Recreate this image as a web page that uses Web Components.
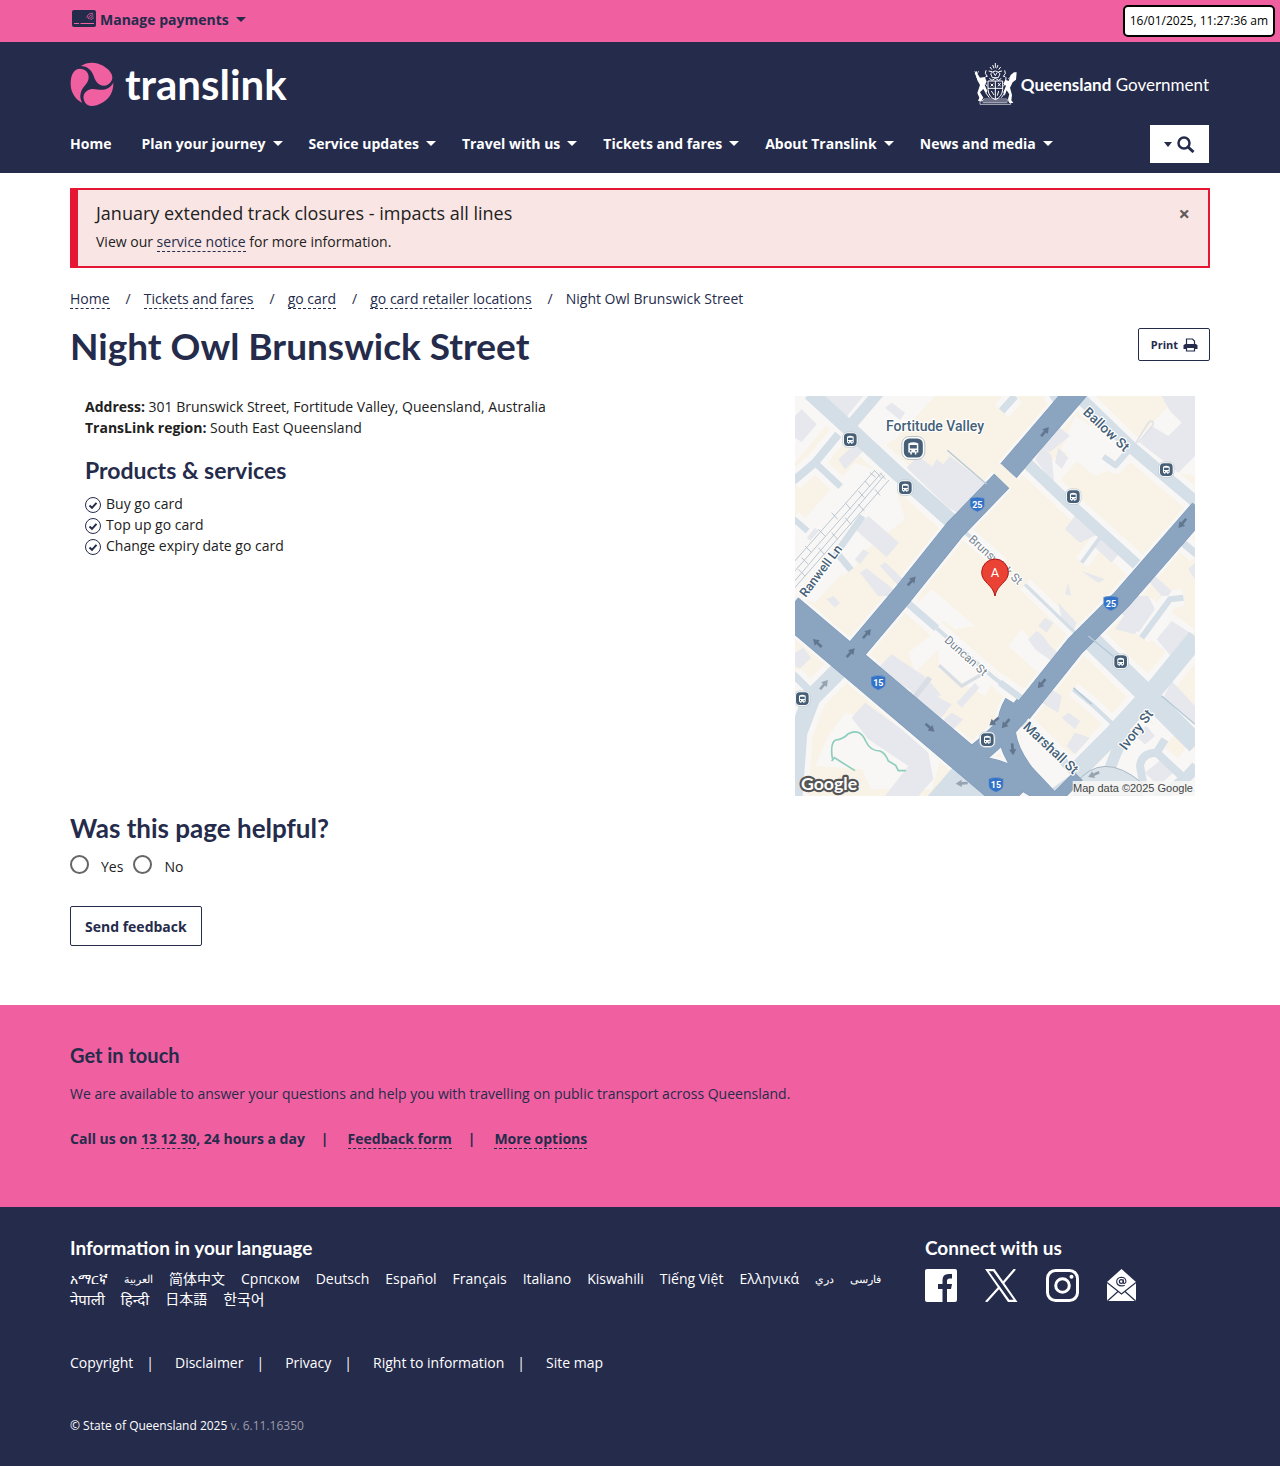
<!DOCTYPE html>
<html lang="en">
<head>
<meta charset="utf-8">
<meta name="viewport" content="width=device-width, initial-scale=1">
<title>Night Owl Brunswick Street | Translink</title>
<style>
  :root {
    --navy: #252b4b;
    --pink: #f060a1;
    --ink: #212121;
    --red: #e61735;
    --display: Lato, "Open Sans", sans-serif;
  }
  body {
    margin: 0;
    background: #fff;
    color: var(--ink);
    font: 14px/21px "Open Sans", "Noto Sans", "Noto Sans CJK SC", sans-serif;
  }
</style>
</head>
<body>
<tl-page>
  <tl-topbar slot="top" stamp="16/01/2025, 11:27:36 am">Manage payments</tl-topbar>
  <tl-header slot="top"></tl-header>
  <tl-alert heading="January extended track closures - impacts all lines">View our <a href="#notice">service notice</a> for more information.</tl-alert>
  <tl-breadcrumbs></tl-breadcrumbs>
  <tl-title>Night Owl Brunswick Street</tl-title>
  <tl-retailer><tl-map slot="map"></tl-map></tl-retailer>
  <tl-helpful></tl-helpful>
  <tl-touch slot="bottom"></tl-touch>
  <tl-footer slot="bottom"></tl-footer>
</tl-page>

<script>
const base = `
  *, *::before, *::after { box-sizing: border-box; }
  :host { display: block; }
  h1, h2, h3, p, ul, ol { margin: 0; padding: 0; }
  ul, ol { list-style: none; }
  svg { display: block; flex: none; }
  a { color: inherit; text-decoration: none; }
  button { font: inherit; color: inherit; cursor: pointer; margin: 0; }
  .wrap { max-width: 1140px; margin: 0 auto; }
  .caret { width: 0; height: 0; border: 5px solid transparent; border-top-color: currentColor; border-bottom: 0; flex: none; }
  .dash { border-bottom: 1px dashed currentColor; }
`;

function define(name, css, html) {
  customElements.define(name, class extends HTMLElement {
    constructor() {
      super();
      const t = document.createElement('template');
      const body = typeof html === 'function' ? html(this) : html;
      t.innerHTML = `<style>${base}${css}</style>${body}`;
      this.attachShadow({ mode: 'open' }).append(t.content.cloneNode(true));
    }
  });
}

define('tl-page', `
  main { max-width: 1140px; margin: 0 auto; padding: 15px 0 59px; }
`, `<slot name="top"></slot><main><slot></slot></main><slot name="bottom"></slot>`);

define('tl-topbar', `
  :host { background: var(--pink); color: var(--navy); position: relative; }
  .wrap { display: flex; align-items: center; height: 42px; }
  button { display: flex; align-items: center; border: 0; background: none; padding: 0 0 4px 1px; font-weight: 700; }
  svg { margin-right: 3px; }
  .caret { margin-left: 7px; }
  time { position: absolute; right: 5px; top: 5px; border: 2px solid #000; border-radius: 5px; background: #fff; color: #000;
    font-size: 12px; line-height: 18px; padding: 5px; }
`, el => `
  <div class="wrap"><button type="button">
    <svg width="26" height="20" viewBox="0 0 26 20"><rect x="1" y="1" width="24" height="17" rx="2" fill="#252b4b"/>
      <path d="M3 14.500h5M9.500 14.500H23" stroke="#f060a1" stroke-width="1"/>
      <g fill="none" stroke="#f060a1" stroke-width=".8"><path d="M16 9a4.500 4.500 0 0 1 6-4.500M17.500 10a4 4 0 0 1 5-4M19 10.500a2.500 2.500 0 0 1 3.500-2.500M20.500 11a1.500 1.500 0 0 1 2-1.500"/></g></svg>
    <slot></slot><span class="caret"></span></button></div>
  <time>${el.getAttribute('stamp')}</time>`);

const navItems = ['Home', 'Plan your journey', 'Service updates', 'Travel with us', 'Tickets and fares', 'About Translink', 'News and media'];
const petal = 'M-29 57C-52 45-64 23-64 0C-64-30-53-46-36-46C-20-45-10-36-10-20C-10 0-30 8-34 28C-37 40-34 49-29 57Z';

define('tl-header', `
  :host { background: var(--navy); color: #fff; }
  .wrap { padding: 20px 0 10px; }
  .brand, .bar, .logo, .gov { display: flex; align-items: center; }
  .brand, .bar { justify-content: space-between; }
  .logo { gap: 11px; font: 700 42px/44px var(--display); }
  .gov { gap: 3px; font: 17px/24px var(--display); padding-right: 1px; }
  .gov span { padding-top: 2px; }
  .gov b { font-weight: 700; }
  .bar { margin-top: 19px; }
  nav { padding-bottom: 2px; }
  ul { display: flex; gap: 26px; font-weight: 700; }
  li:first-child { margin-right: 4px; }
  li a { display: flex; align-items: center; gap: 7px; }
  .search { display: flex; align-items: center; gap: 5px; border: 0; background: #fff; color: var(--navy);
    padding: 10px 14px; height: 38px; margin-right: 1px; }
  .search .caret { border-width: 5px 4px 0; }
`, `
  <div class="wrap">
    <div class="brand">
      <a class="logo" href="#home">
        <svg width="44" height="44" viewBox="-66 -66 132 132" fill="#f060a1"><path d="${petal}"/><path d="${petal}" transform="rotate(120)"/><path d="${petal}" transform="rotate(240)"/></svg>
        <span>translink</span></a>
      <a class="gov" href="#government">
        <svg width="44" height="42" viewBox="0 0 132 126" fill="none" stroke="#fff" stroke-width="3">
          <path d="M56 6l4 10M64 0v14M72 6l-4 10M48 12l6 8M80 12l-6 8M44 24l10 2M84 24l-10 2M50 32q14-16 28 0l-5 12H55zM36 22q-6 10 4 18q-12 0-6 14M92 22q6 10-4 18q12 0 6 14M58 28l6 10 6-10" />
          <path d="M42 54h44v26q-2 22-22 30q-20-8-22-30zM64 54v54M42 76h44M50 62l8 8M58 62l-8 8M72 60l8 10M80 60l-8 10M52 84l8 12M74 84l-4 14"/>
          <path d="M46 46l8 6 10-6 10 6 8-6M34 62l6 8M94 62l-6 8M36 90l10 14M92 90l-10 14"/>
          <path fill="#fff" stroke="none" d="M2 30l6-6 4 12 6 8 14-2 6 14-6 10 8 18-4 8-8-14-10 10 10 16-6 10h-10l4-10-6-14 8-24-8-14-2-8zM128 28l-8 0-10 8-6 18-10-4-6 12 8 6-8 20 4 10 6-16 8 12-4 14 4 12h12l-6-8 2-16-6-22 8-16 10-8z"/>
          <path d="M8 34L2 24M14 24l-4 8M6 44l8-6M102 48l18-16M106 54l18-14M18 114h92v10H18zM24 114l6-6h68l6 6M26 119h74" stroke-width="2"/>
        </svg>
        <span><b>Queensland</b> Government</span></a>
    </div>
    <div class="bar">
      <nav aria-label="Main"><ul>${navItems.map((t, i) => `<li><a href="#nav${i}">${t}${i ? '<span class="caret"></span>' : ''}</a></li>`).join('')}</ul></nav>
      <button class="search" type="button" aria-label="Search"><span class="caret"></span>
        <svg width="18" height="18" viewBox="0 0 18 18" fill="none" stroke="#252b4b"><circle cx="7" cy="8" r="5.500" stroke-width="2.500"/><path d="M11 12l5.500 5" stroke-width="3"/></svg></button>
    </div>
  </div>`);

define('tl-alert', `
  :host { display: flex; justify-content: space-between; align-items: flex-start; border: 2px solid var(--red); border-left-width: 8px;
    background: #f9e5e3; padding: 11px 18px 13px; }
  h2 { font-size: 18px; line-height: 24px; font-weight: 400; margin-bottom: 6px; }
  p { line-height: 22px; }
  ::slotted(a) { color: var(--navy); text-decoration: none; border-bottom: 1px dashed var(--navy); }
  button { border: 0; background: none; padding: 0; color: #5f5b5b; font-size: 20px; line-height: 26px; font-weight: 700; }
`, el => `<div><h2>${el.getAttribute('heading')}</h2><p><slot></slot></p></div><button type="button" aria-label="Close">×</button>`);

define('tl-breadcrumbs', `
  :host { margin-top: 21px; }
  ol { display: flex; flex-wrap: wrap; color: var(--navy); line-height: 20px; }
  li + li::before { content: "/"; padding: 0 13px 0 16px; }
  a { display: inline-block; line-height: 19px; }
`, `<nav aria-label="Breadcrumb"><ol>
  <li><a class="dash" href="#a">Home</a></li><li><a class="dash" href="#b">Tickets and fares</a></li><li><a class="dash" href="#c">go card</a></li><li><a class="dash" href="#d">go card retailer locations</a></li><li aria-current="page">Night Owl Brunswick Street</li></ol></nav>`);

define('tl-title', `
  :host { display: flex; justify-content: space-between; align-items: flex-start; color: var(--navy); margin-top: 19px; }
  h1 { font: 700 37px/36px var(--display); }
  button { display: flex; align-items: center; gap: 5px; height: 33px; padding: 0 11px 0 12px; background: #fff;
    border: 1px solid var(--navy); border-radius: 2px; font-size: 11px; font-weight: 700; }
`, `<h1><slot></slot></h1>
  <button type="button">Print
    <svg width="15" height="14" viewBox="0 0 15 14"><path d="M3.500 6.500V1h6L11.500 3v3.500" fill="#fff" stroke="#252b4b" stroke-width="1.200"/><path d="M2 6h11l1.500 1.500V11H.5V7.500z" fill="#252b4b"/><path d="M3.500 9.500h8v3.500h-8z" fill="#fff" stroke="#252b4b" stroke-width="1.200"/></svg></button>`);

define('tl-retailer', `
  :host { display: flex; justify-content: space-between; margin: 32px 15px 0; }
  b { font-weight: 700; }
  h2 { font: 700 23px/28px var(--display); color: var(--navy); margin: 18px 0 9px; }
  li { display: flex; align-items: center; gap: 5px; }
  svg { margin-top: 2px; }
`, `<section>
    <p><b>Address:</b> 301 Brunswick Street, Fortitude Valley, Queensland, Australia</p>
    <p><b>TransLink region:</b> South East Queensland</p>
    <h2>Products &amp; services</h2>
    <ul>${['Buy go card', 'Top up go card', 'Change expiry date go card'].map(t => `<li><svg width="16" height="16" viewBox="0 0 16 16" fill="none" stroke="#252b4b"><circle cx="8" cy="8" r="7.500"/><path d="M4.500 8.500l2.500 2.300 4.500-5" stroke-width="2"/></svg>${t}</li>`).join('')}</ul>
  </section><slot name="map"></slot>`);

const stop = (x, y, s = 1) => `<g transform="translate(${x} ${y}) scale(${s})"><rect x="-23" y="-23" width="46" height="46" rx="15" fill="#fff" stroke="#b8c2cc" stroke-width="2"/><rect x="-19" y="-19" width="38" height="38" rx="11" fill="#465f77"/><path d="M-10-9q10-5 20 0V9H6v4H3V9H-3v4H-6V9H-10z" fill="#fff"/><path d="M-7-6H7V1H-7zM-7 4h3v3h-3zM4 4h3v3H4z" fill="#465f77"/></g>`;
const shield = (x, y, n) => `<g transform="translate(${x} ${y})"><path d="M-22-18Q0-26 22-18V4Q20 16 0 23Q-20 16-22 4Z" fill="#3272c8" stroke="#8ba5c1" stroke-width="2"/><text y="10" font-size="27" font-weight="700" fill="#fff" text-anchor="middle">${n}</text></g>`;
const arrow = (x, y, r, c = '#62778f') => `<path transform="translate(${x} ${y}) rotate(${r})" d="M-18-4H0V-11L18 0L0 11V4H-18Z" fill="${c}"/>`;
const streets = [
  ['M45-10L160 95L300 225L480 385', 46], ['M255-15L165 90', 34], ['M130 115L60 200L-5 255', 24], ['M60 200L137 272', 20],
  ['M-5 368L38 405', 18], ['M203 360L125 470L168 522', 20], ['M850 0L1010 155L1205 320', 36], ['M700 205L820 320L1025 505', 34],
  ['M925 182L962 208L1008 155', 18], ['M500 400L620 505', 12], ['M690 565L840 710', 10], ['M325 610L425 697', 22], ['M425 697L600 848L680 908', 12],
  ['M615 860L680 908', 20], ['M880 725L1060 900L1205 1045', 60], ['M1205 725L1070 890L950 1020L835 1135', 56], ['M670 965L850 1140', 26],
  ['M130 825L50 905L10 1010L-5 1210', 54], ['M-5 835L40 880', 22], ['M1145 425L1205 475', 22], ['M1165 605L1125 610L1040 725', 18],
  ['M620 45L660 0', 22], ['M770-10L790 20', 24], ['M925 1180Q960 1060 1000 1000', 34], ['M1050 1190L1035 1110Q1040 1070 1085 1070L1110 1030M1085 1070L1160 1140', 24],
  ['M1075 1200Q1140 1190 1205 1110', 34], ['M835 880L890 925L960 990', 12], ['M860 500L915 425', 12], ['M770 1190L840 1140', 20]
];
const majors = [['M850-20L640 225', 62], ['M620 255L480 400L320 600L160 790', 60], ['M-20 640L600 1165L650 1220', 90],
  ['M1215 340L980 610L840 750L680 950', 58], ['M690 930Q560 1080 500 1100', 62], ['M655 920Q600 1010 690 1130L770 1215', 52],
  ['M560 1110Q660 1130 740 1190', 56], ['M850 1140L780 1210', 34]];
const draw = (list, extra, color) => list.map(([d, w]) => `<path d="${d}" stroke-width="${w + extra}" stroke="${color}"/>`).join('');

define('tl-map', `
  :host { width: 400px; height: 400px; flex: none; }
  svg { width: 100%; height: 100%; font-family: Roboto, sans-serif; }
`, `<svg viewBox="0 0 1200 1200" role="img" aria-label="Map of Night Owl Brunswick Street">
  <rect width="1200" height="1200" fill="#f8f3e6"/>
  <g fill="#f8f7f5">
    <path d="M0 0H45L110 70L0 200zM185 75L260 0H420L300 130L250 160zM0 400L180 200L290 240L330 370L190 480L60 620L0 600z"/>
    <path d="M840 60L1000 160L1130 20H1200V240L1000 200L900 240L800 160zM740 220L800 170L850 190L780 270zM830 330L1050 480L1020 560L850 400z"/>
    <path d="M430 700L600 850L570 900L430 820zM340 770L430 700L430 760L360 830zM150 950L330 990L440 1080L410 1180H230L200 1120L60 1110L100 1020z"/>
    <path d="M670 970L850 1130L760 1190L690 1100zM950 620L1060 600L1200 700L1140 790L1030 700zM1000 940L1200 1060V1200H850L920 1100z"/>
    <path d="M410 580L540 690L480 700L370 620zM640 750L680 700L760 790L730 830z"/>
  </g>
  <g fill="none" stroke-linejoin="round">${draw(streets, 34, '#f8f7f5')}${draw(majors, 20, '#f8f7f5')}</g>
  <g fill="#e7e8ed">
    <path d="M20 40L65 85L20 138L0 125V60zM85 0H205L155 62zM270 35L290 20L330 50L315 72zM185 140L205 165L150 220L130 190z"/>
    <path d="M335 215L370 180L412 212L425 190L445 205L465 180L572 265L490 352L460 335z"/>
    <path d="M180 400L220 360L312 440L275 483zM180 490L205 460L222 470L195 503zM195 530L215 517L320 600H250zM255 510L270 498L330 555L315 575z"/>
    <path d="M35 425L60 395L72 405L45 435z"/>
    <path d="M740 150L785 88L825 120L765 168zM720 190L745 150L770 180L778 265zM780 200L790 155L820 185L800 218zM1100 0H1200V180L1150 230L1035 140L1070 90L1120 120L1160 80L1125 45z"/>
    <path d="M810 400L840 360L910 415L855 440zM895 450L910 425L970 475L950 500zM810 595L820 560L828 600zM860 525L930 550L910 560L880 540z"/>
    <path d="M255 810L290 775L395 845L440 900L360 890L330 895L350 885L275 840zM360 900L405 885L440 910L470 925L440 965L395 960zM430 985L470 950L505 970L470 1005zM485 920L540 860L553 875L500 935z"/>
    <path d="M170 965L210 920L320 1000L400 1070L415 1150L370 1200H270L340 1110L220 1030zM0 770L25 755L48 785L15 818L0 810z"/>
    <path d="M700 730L725 705L745 720L765 750L795 775L770 795L720 760zM730 690L750 665L775 680L755 710z"/>
    <path d="M740 920L770 880L800 900L790 950zM800 965L820 950L855 975L840 1000zM840 1010L885 1025L840 1075L815 1050zM790 620L845 680L835 710L800 670zM960 700L1000 640L1040 680L1020 715z"/>
    <path d="M970 640L1010 600H1060L1080 640L1030 710zM1085 730L1130 675L1200 720L1140 795zM1105 905L1130 855L1200 930V985zM1010 1010L1055 990L1080 1020L1050 1045z"/>
    <path d="M1060 555L1080 540L1130 585L1120 600H1100zM1180 520L1200 500V550zM1050 1130L1100 1090L1135 1130L1090 1170zM95 610L115 600L135 620L120 635z"/>
  </g>
  <path fill="#f8f3e6" d="M1110 1055L1150 1000L1190 1030L1150 1085zM880 300L910 255L955 290L920 335z"/>
  <g fill="none" stroke="#bac7d2" stroke-width="3"><path d="M-5 500L240 222M-5 530L260 230M-5 560L268 238M-5 580L282 252"/>
    <path d="M225 230L242 244M240 225L258 245M255 230L272 250M110 350L128 370M150 320L168 340M190 285L208 305M70 400L90 420M30 450L50 470M20 485L40 505M150 365L168 385M190 325L208 345M110 410L128 430M70 455L88 475M210 255L225 272M240 280L255 298M10 520L30 540"/></g>
  <g fill="none" stroke-linejoin="round">
    ${draw(streets.slice(0, 6), 0, '#d3dee6')}${draw(streets.slice(6), 0, '#d5dfe7')}
    <path d="M432 808L500 870L560 835" stroke="#d9dee5" stroke-width="10"/>
    <path d="M350 915L405 845" stroke="#d9dee5" stroke-width="16"/>
    <path d="M1020 145L1060 80Q1075 68 1075 85L1030 140" stroke="#dcdfe4" stroke-width="4"/>
  </g>
  <path d="M475 1112L660 1210H390z" fill="#d5dfe7"/>
  <path d="M840 1165Q920 1060 1040 1160V1200H840z" fill="#d9e2e8" stroke="#a9b8c4" stroke-width="3"/>
  <g fill="none" stroke-linejoin="round">${draw(majors, 3, '#7896b8')}${draw(majors, 0, '#8ba5c1')}</g>
  <path d="M610 211L661 259" stroke="#f8f3e6" stroke-width="22"/>
  <path d="M1115 1175Q1145 1165 1200 1185" stroke="#86cbb8" fill="none" stroke-width="4"/>
  <path d="M457 163L575 265M880 720L960 785M835 875L890 925M1100 900L1200 985" stroke="#b4c8d9" stroke-width="4"/>
  <path d="M110 1095L118 1085L180 1124M112 1087Q105 1040 122 1032Q145 1030 160 1013Q195 995 212 1035Q225 1065 255 1065Q270 1070 280 1095L302 1108L310 1124H333" fill="none" stroke="#8dcdbd" stroke-width="5"/>
  ${arrow(350, 555, -48)}${arrow(750, 107, -50)}${arrow(1162, 382, 130)}${arrow(67, 741, -137)}${arrow(216, 713, -48)}${arrow(167, 770, -48)}${arrow(87, 866, -50, '#96a3b0')}${arrow(405, 995, 42)}${arrow(597, 977, 140)}${arrow(740, 863, 130)}${arrow(632, 983, 130)}${arrow(653, 1060, 85)}${arrow(500, 1162, 177, '#96a3b0')}${arrow(896, 1136, 157, '#96a3b0')}
  <g fill="#465f77" stroke="#fff" stroke-width="7" paint-order="stroke" stroke-linejoin="round" font-weight="500" font-size="41">
    <text x="273" y="105" font-size="42">Fortitude Valley</text>
    <text transform="translate(862 52) rotate(43)">Ballow St</text>
    <text transform="translate(32 606) rotate(-53)" font-size="38">Ranwell Ln</text>
    <text transform="translate(682 995) rotate(43)">Marshall St</text>
    <text transform="translate(993 1065) rotate(-53)">Ivory St</text>
    <g fill="#76838f" font-weight="400" font-size="35"><text transform="translate(519 433) rotate(42)">Brunswick St</text><text transform="translate(446 735) rotate(42)">Duncan St</text></g>
  </g>
  ${shield(547, 325, 25)}${shield(948, 622, 25)}${shield(250, 860, 15)}${shield(603, 1166, 15)}
  ${stop(166, 131)}${stop(331, 275)}${stop(355, 156, 1.5)}${stop(835, 302)}${stop(1114, 221)}${stop(22, 908)}${stop(577, 1031)}${stop(977, 797)}
  <path d="M600 600C594 565 560 560 560 529A40 40 0 0 1 640 529C640 560 606 565 600 600Z" fill="#ea4335" stroke="#b31412" stroke-width="3"/>
  <text x="600" y="542" font-size="39" fill="#fff" text-anchor="middle">A</text>
  <text x="18" y="1182" font-family="Lato" font-size="53" font-weight="700" fill="#fff" stroke="#555" stroke-width="13" paint-order="stroke" stroke-linejoin="round">Google</text>
  <rect x="833" y="1155" width="367" height="45" fill="#f7f7f5" fill-opacity=".85"/>
  <text x="1194" y="1187" font-family="Liberation Sans" font-size="33" fill="#444" text-anchor="end">Map data ©2025 Google</text>
</svg>`);

define('tl-helpful', `
  :host { color: var(--navy); margin-top: 16px; }
  h2 { font: 700 26px/32px var(--display); }
  fieldset { border: 0; margin: 0; padding: 0; min-width: 0; }
  .opts { display: flex; gap: 10px; margin-top: 9px; }
  label { display: flex; gap: 12px; color: var(--ink); padding-top: 2px; line-height: 24px; }
  input { appearance: none; width: 19px; height: 19px; margin: 0; border: 2px solid #666; border-radius: 50%; background: #fff; }
  input:checked { background: var(--navy); box-shadow: inset 0 0 0 3px #fff; }
  button { margin-top: 27px; height: 40px; padding: 0 14px; border: 1px solid var(--navy); border-radius: 2px; background: #fff; font-weight: 700; }
`, `<form><fieldset aria-labelledby="q"><h2 id="q">Was this page helpful?</h2>
  <div class="opts"><label for="yes"><input type="radio" id="yes" name="helpful">Yes</label><label for="no"><input type="radio" id="no" name="helpful">No</label></div></fieldset>
  <button type="button">Send feedback</button></form>`);

define('tl-touch', `
  :host { background: var(--pink); color: var(--navy); padding: 36px 0 58px; }
  h2 { font: 700 20px/28px var(--display); margin-bottom: 14px; }
  ul { display: flex; margin-top: 24px; font-weight: 700; }
  li + li::before { content: "|"; padding: 0 19px 0 16px; }
  a { display: inline-block; line-height: 19px; }
`, `<div class="wrap"><h2>Get in touch</h2>
  <p>We are available to answer your questions and help you with travelling on public transport across Queensland.</p>
  <ul><li>Call us on <a class="dash" href="tel:131230">13 12 30</a>, 24 hours a day</li><li><a class="dash" href="#feedback">Feedback form</a></li><li><a class="dash" href="#more">More options</a></li></ul></div>`);

const langs = [['am', 'አማርኛ'], ['ar', 'العربية'], ['zh', '简体中文'], ['sr', 'Српском'], ['de', 'Deutsch'], ['es', 'Español'], ['fr', 'Français'], ['it', 'Italiano'], ['sw', 'Kiswahili'], ['vi', 'Tiếng Việt'], ['el', 'Ελληνικά'], ['prs', 'دري'], ['fa', 'فارسی'], ['ne', 'नेपाली'], ['hi', 'हिन्दी'], ['ja', '日本語'], ['ko', '한국어']];

define('tl-footer', `
  :host { background: var(--navy); color: #fff; padding: 28px 0 31px; }
  .cols { display: grid; grid-template-columns: 3fr 1fr; }
  .cols > :first-child { padding-right: 30px; }
  h2 { font: 700 19px/26px var(--display); }
  .langs { display: flex; flex-wrap: wrap; column-gap: 16px; margin-top: 8px; }
  .langs li { height: 20px; line-height: 20px; white-space: nowrap; }
  :lang(ar), :lang(prs), :lang(fa) { font-size: 11px; }
  :lang(ne), :lang(hi), :lang(ko) { font-size: 15px; }
  .social { display: flex; gap: 28px; margin-top: 8px; }
  .links { display: flex; margin-top: 43px; }
  .links li + li::before { content: "|"; padding: 0 21px 0 13px; }
  p { margin-top: 42px; font-size: 12px; }
  p span { color: #9b9da9; }
`, `<div class="wrap"><div class="cols">
  <section><h2>Information in your language</h2><ul class="langs">${langs.map(([c, t]) => `<li lang="${c}"><a href="#${c}">${t}</a></li>`).join('')}</ul></section>
  <section><h2>Connect with us</h2><ul class="social">
    <li><a href="#fb" aria-label="Facebook"><svg width="32" height="33" viewBox="0 0 32 33"><rect width="32" height="33" rx="2" fill="#fff"/><path d="M17.500 33V20H13v-5h4.500v-4q0-6 6-6H27v4.500h-2.500q-2.500 0-2.500 2.500v3h5l-1 5h-4v13z" fill="#252b4b"/></svg></a></li>
    <li><a href="#x" aria-label="X"><svg width="33" height="33" viewBox="0 0 33 33"><path d="M0 0h9.500l23 33H23zM3.800 2.200l20.500 28.600h4.300L8.200 2.200z" fill="#fff" fill-rule="evenodd"/><path d="M30 0L18 14M14.500 18L1 33" stroke="#fff" stroke-width="2.200"/></svg></a></li>
    <li><a href="#ig" aria-label="Instagram"><svg width="33" height="33" viewBox="0 0 33 33" fill="none" stroke="#fff" stroke-width="3"><rect x="1.500" y="1.500" width="30" height="30" rx="8"/><circle cx="16.500" cy="16.500" r="6.800"/><circle cx="25.500" cy="7.800" r="2" fill="#fff" stroke="none"/></svg></a></li>
    <li><a href="#mail" aria-label="Email"><svg width="29" height="33" viewBox="0 0 29 33"><path d="M14.500 0L29 13v17q0 2-2 2H2q-2 0-2-2V13z" fill="#fff"/><path d="M0 13.500L14.500 25L29 13.500M1 31.500L11 22.500M28 31.500L18 22.500" stroke="#252b4b" stroke-width="1.200" fill="none"/><circle cx="14.300" cy="12.500" r="1.900" fill="none" stroke="#252b4b" stroke-width="1.200"/><path d="M16.300 10.500v3q.3 1.200 1.600.8q1.300-.8 1-2.500q-.7-3.600-4.500-3.600q-4.700.4-4.700 4.400q.2 4.300 5 4.300q1.700 0 3-.7" fill="none" stroke="#252b4b" stroke-width="1.100"/></svg></a></li>
  </ul></section></div>
  <ul class="links">${['Copyright', 'Disclaimer', 'Privacy', 'Right to information', 'Site map'].map((t, i) => `<li><a href="#l${i}">${t}</a></li>`).join('')}</ul>
  <p>© State of Queensland 2025 <span>v. 6.11.16350</span></p></div>`);
</script>
</body>
</html>
